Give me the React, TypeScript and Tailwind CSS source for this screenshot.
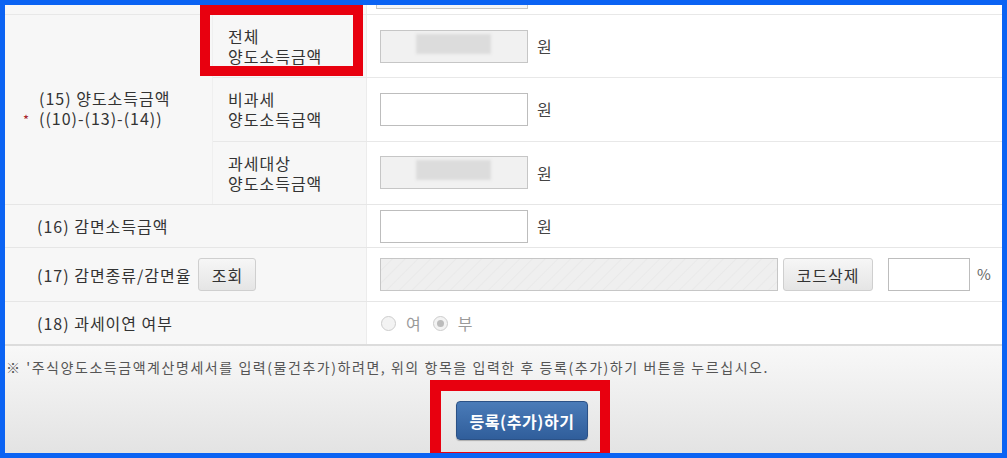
import React from 'react'

const font = "font-['Malgun_Gothic','Noto_Sans_CJK_KR','Noto_Sans',sans-serif]"

function Blurred() {
  return (
    <div className="w-[148px] h-[33px] border border-[#c6c6c6] bg-[#f1f1f1] flex items-start pl-[35px] pt-[3px]">
      <div className="w-[75px] h-[20px] bg-[#dcdcdc] blur-[1.5px]" />
    </div>
  )
}

function Empty({ w = 'w-[148px]' }: { w?: string }) {
  return <div className={`${w} h-[33px] border border-[#bdbdbd] bg-white`} />
}

function Won() {
  return <span className="ml-[9px] text-[16px] text-[#444]">원</span>
}

function GrayButton({ children, w }: { children: React.ReactNode; w: string }) {
  return (
    <div
      className={`${w} h-[33px] border border-[#cfcfcf] rounded-[3px] bg-gradient-to-b from-[#f6f6f6] to-[#e5e5e5] flex items-center justify-center text-[16px] text-[#333] tracking-[1px]`}
    >
      {children}
    </div>
  )
}

function Radio({ checked }: { checked?: boolean }) {
  return (
    <span className="w-[15px] h-[15px] rounded-full border border-[#cdcdcd] bg-[#f3f3f3] flex items-center justify-center">
      {checked && <span className="w-[7px] h-[7px] rounded-full bg-[#bcbcbc]" />}
    </span>
  )
}

export default function App() {
  return (
    <div className={`w-[1007px] h-[458px] border-[5px] border-[#0b63f3] bg-white relative overflow-hidden flex flex-col ${font} text-[#333]`}>
      {/* partial row cut off at top */}
      <div className="flex h-[10px] border-b border-[#e8e8e8] shrink-0">
        <div className="w-[362px] bg-[#f7f7f7] border-r border-[#ececec]" />
        <div className="flex-1 pl-[9px] overflow-hidden flex flex-col justify-end pb-[5px]">
          <div className="w-[152px] h-[33px] shrink-0 border border-[#c6c6c6] bg-[#f6f6f6]" />
        </div>
      </div>

      {/* (15) */}
      <div className="flex h-[190px] border-b border-[#e6e6e6] shrink-0">
        <div className="w-[208px] bg-[#f7f7f7] border-r border-[#efefef] flex flex-col justify-center pl-[18px] text-[16px] leading-[20px] tracking-[1px]">
          <div className="flex">
            <span className="w-[16px]" />
            <span>(15) 양도소득금액</span>
          </div>
          <div className="flex">
            <span className="w-[16px] text-[13px] text-[#a8242c] leading-[24px]">*</span>
            <span>((10)-(13)-(14))</span>
          </div>
        </div>
        <div className="flex-1 flex flex-col">
          {[
            ['전체', true],
            ['비과세', false],
            ['과세대상', true],
          ].map(([top, ro], i) => (
            <div key={i} className={`flex flex-1 ${i < 2 ? 'border-b border-[#e8e8e8]' : ''}`}>
              <div className="w-[154px] bg-[#f7f7f7] border-r border-[#ececec] flex flex-col justify-center pl-[15px] text-[16px] leading-[20px] tracking-[1px]">
                <span>{top as string}</span>
                <span>양도소득금액</span>
              </div>
              <div className="flex-1 flex items-center pl-[13px]">
                {ro ? <Blurred /> : <Empty />}
                <Won />
              </div>
            </div>
          ))}
        </div>
      </div>

      {/* (16) */}
      <div className="flex h-[43px] border-b border-[#e6e6e6] shrink-0">
        <div className="w-[362px] bg-[#f7f7f7] border-r border-[#ececec] flex items-center pl-[32px] text-[16px] tracking-[1px]">
          (16) 감면소득금액
        </div>
        <div className="flex-1 flex items-center pl-[13px]">
          <Empty />
          <Won />
        </div>
      </div>

      {/* (17) */}
      <div className="flex h-[54px] border-b border-[#e6e6e6] shrink-0">
        <div className="w-[362px] bg-[#f7f7f7] border-r border-[#ececec] flex items-center pl-[32px] text-[16px] tracking-[1px]">
          <span>(17) 감면종류/감면율</span>
          <span className="ml-[7px]">
            <GrayButton w="w-[58px]">조회</GrayButton>
          </span>
        </div>
        <div className="flex-1 flex items-center pl-[13px]">
          <div className="w-[398px] h-[33px] border border-[#c6c6c6] bg-[repeating-linear-gradient(135deg,#efefef_0px,#efefef_7px,#e9e9e9_8px,#efefef_9px)]" />
          <span className="ml-[5px]">
            <GrayButton w="w-[90px]">코드삭제</GrayButton>
          </span>
          <span className="ml-[15px]">
            <Empty w="w-[82px]" />
          </span>
          <span className="ml-[7px] text-[15px] text-[#666]">%</span>
        </div>
      </div>

      {/* (18) */}
      <div className="flex h-[44px] border-b-2 border-[#dcdcdc] shrink-0">
        <div className="w-[362px] bg-[#f7f7f7] border-r border-[#ececec] flex items-center pl-[32px] text-[16px] tracking-[1px]">
          (18) 과세이연 여부
        </div>
        <div className="flex-1 flex items-center pl-[14px] text-[16px] text-[#9a9a9a]">
          <Radio />
          <span className="ml-[10px]">여</span>
          <span className="ml-[12px]">
            <Radio checked />
          </span>
          <span className="ml-[10px]">부</span>
        </div>
      </div>

      {/* bottom */}
      <div className="flex-1 bg-gradient-to-b from-[#f8f8f8] to-[#e3e3e3] flex flex-col">
        <p className="pl-[1px] pt-[12px] text-[14px] leading-[19px] tracking-[1.55px] text-[#555] whitespace-nowrap">
          ※ '주식양도소득금액계산명세서를 입력(물건추가)하려면, 위의 항목을 입력한 후 등록(추가)하기 버튼을 누르십시오.
        </p>
        <div className="pl-[451px] pt-[24px]">
          <div className="w-[132px] h-[39px] rounded-[4px] border border-[#2b5186] bg-gradient-to-b from-[#4a7bb8] to-[#305e9b] flex items-center justify-center text-white text-[16px] font-bold tracking-[0.6px] shadow-[0_1px_1px_rgba(0,0,0,0.25)]">
            등록(추가)하기
          </div>
        </div>
      </div>

      {/* annotation boxes */}
      <div className="absolute left-[195px] top-[0px] w-[163px] h-[71px] border-[10px] border-[#e8000f]" />
      <div className="absolute left-[425px] top-[375px] w-[180px] h-[78px] border-[#e8000f] border-l-[11px] border-t-[11px] border-r-[10px] border-b-[6px]" />
    </div>
  )
}
